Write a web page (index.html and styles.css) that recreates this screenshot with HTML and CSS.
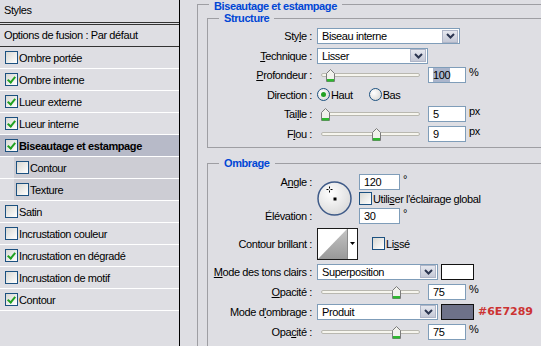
FILE: index.html
```html
<!DOCTYPE html>
<html lang="fr">
<head>
  <meta charset="UTF-8">
  <meta name="viewport" content="width=device-width, initial-scale=1.0">
  <title>Style de calque</title>
  <link rel="stylesheet" href="styles.css">
</head>
<body>
<div class="dialog">
  <div class="styles-list">
    <div class="list-head">Styles</div>
    <div class="list-options">Options de fusion : Par défaut</div>
    <div class="list-item"><span class="check"></span>Ombre portée</div>
    <div class="list-item"><span class="check on"></span>Ombre interne</div>
    <div class="list-item"><span class="check on"></span>Lueur externe</div>
    <div class="list-item"><span class="check on"></span>Lueur interne</div>
    <div class="list-item selected"><span class="check on"></span>Biseautage et estampage</div>
    <div class="list-item sub"><span class="check"></span>Contour</div>
    <div class="list-item sub"><span class="check"></span>Texture</div>
    <div class="list-item"><span class="check"></span>Satin</div>
    <div class="list-item"><span class="check"></span>Incrustation couleur</div>
    <div class="list-item"><span class="check on"></span>Incrustation en dégradé</div>
    <div class="list-item"><span class="check"></span>Incrustation de motif</div>
    <div class="list-item"><span class="check on"></span>Contour</div>
  </div>

  <div class="settings">
    <fieldset class="group outer">
      <legend>Biseautage et estampage</legend>
      <div class="group-body">

        <fieldset class="group structure">
          <legend>Structure</legend>
          <div class="rows">
            <div class="row">
              <label>Sty<u>l</u>e :</label>
              <div class="select style-select">
                <span class="value">Biseau interne</span>
                <span class="arrow"><svg width="9" height="6" viewBox="0 0 9 6"><path d="M1 1l3.5 3.5L8 1" fill="none" stroke="#2b3550" stroke-width="2"/></svg></span>
              </div>
            </div>
            <div class="row">
              <label><u>T</u>echnique :</label>
              <div class="select tech-select">
                <span class="value">Lisser</span>
                <span class="arrow"><svg width="9" height="6" viewBox="0 0 9 6"><path d="M1 1l3.5 3.5L8 1" fill="none" stroke="#2b3550" stroke-width="2"/></svg></span>
              </div>
            </div>
            <div class="row">
              <label><u>P</u>rofondeur :</label>
              <div class="slider">
                <svg class="thumb" style="left:9px" width="9" height="13" viewBox="0 0 9 13"><path d="M.5 4.5L4.5.5l4 4v8h-8z" fill="#f1f1ec" stroke="#7b7b7b"/><path d="M1 10h7v2.5H1z" fill="#2eb82e"/></svg>
              </div>
              <span class="field"><span class="picked">100</span></span>
              <span class="unit">%</span>
            </div>
            <div class="row">
              <label>Direction :</label>
              <span class="radio on"><span class="dot"></span>Haut</span>
              <span class="radio"><span class="dot"></span>Bas</span>
            </div>
            <div class="row">
              <label>Tai<u>l</u>le :</label>
              <div class="slider">
                <svg class="thumb" style="left:4px" width="9" height="13" viewBox="0 0 9 13"><path d="M.5 4.5L4.5.5l4 4v8h-8z" fill="#f1f1ec" stroke="#7b7b7b"/><path d="M1 10h7v2.5H1z" fill="#2eb82e"/></svg>
              </div>
              <span class="field">5</span>
              <span class="unit">px</span>
            </div>
            <div class="row">
              <label>F<u>l</u>ou :</label>
              <div class="slider">
                <svg class="thumb" style="left:55px" width="9" height="13" viewBox="0 0 9 13"><path d="M.5 4.5L4.5.5l4 4v8h-8z" fill="#f1f1ec" stroke="#7b7b7b"/><path d="M1 10h7v2.5H1z" fill="#2eb82e"/></svg>
              </div>
              <span class="field">9</span>
              <span class="unit">px</span>
            </div>
          </div>
        </fieldset>

        <fieldset class="group shading">
          <legend>Ombrage</legend>
          <div class="rows">
            <div class="angle-block">
              <label class="angle-label">A<u>n</u>gle :</label>
              <svg class="dial" width="35" height="35" viewBox="0 0 35 35">
                <defs>
                  <radialGradient id="dialfill" cx="40%" cy="35%" r="70%">
                    <stop offset="0" stop-color="#ffffff"/>
                    <stop offset="1" stop-color="#d9d9d9"/>
                  </radialGradient>
                </defs>
                <circle cx="17.5" cy="17.5" r="16.5" fill="url(#dialfill)" stroke="#3e5a88" stroke-width="1.5"/>
                <path d="M12.5 5.5v2M12.5 9.5v2M9.5 8.5h2M13.5 8.5h2" stroke="#000" stroke-width="1"/>
                <rect x="16.5" y="16.5" width="3" height="3" fill="#000"/>
              </svg>
              <div class="angle-value"><span class="field wide">120</span><span class="unit">°</span></div>
              <div class="global-light"><span class="check"></span>Utili<u>s</u>er l'éclairage global</div>
              <label class="elev-label">Élévation :</label>
              <div class="elev-value"><span class="field wide">30</span><span class="unit">°</span></div>
            </div>
            <div class="row contour-row">
              <label>Contour brillant :</label>
              <svg class="contour" width="41" height="32" viewBox="0 0 41 32">
                <defs>
                  <linearGradient id="contourfill" x1="0" y1="0" x2="0" y2="1">
                    <stop offset="0" stop-color="#c4c4c4"/>
                    <stop offset="1" stop-color="#999999"/>
                  </linearGradient>
                </defs>
                <rect x=".5" y=".5" width="40" height="31" fill="#fff" stroke="#1a1a1a"/>
                <path d="M1 31L30 1v30z" fill="url(#contourfill)"/>
                <path d="M30.5 1v30" stroke="#8a8a8a"/>
                <path d="M33 14h5l-2.5 3z" fill="#000"/>
              </svg>
              <span class="check lisse"></span>Li<u>s</u>sé
            </div>
            <div class="row">
              <label><u>M</u>ode des tons clairs :</label>
              <div class="select mode-select">
                <span class="value">Superposition</span>
                <span class="arrow"><svg width="9" height="6" viewBox="0 0 9 6"><path d="M1 1l3.5 3.5L8 1" fill="none" stroke="#2b3550" stroke-width="2"/></svg></span>
              </div>
              <span class="swatch light"></span>
            </div>
            <div class="row">
              <label><u>O</u>pacité :</label>
              <div class="slider">
                <svg class="thumb" style="left:75px" width="9" height="13" viewBox="0 0 9 13"><path d="M.5 4.5L4.5.5l4 4v8h-8z" fill="#f1f1ec" stroke="#7b7b7b"/><path d="M1 10h7v2.5H1z" fill="#2eb82e"/></svg>
              </div>
              <span class="field">75</span>
              <span class="unit">%</span>
            </div>
            <div class="row">
              <label>Mode d<u>'</u>ombrage :</label>
              <div class="select mode-select">
                <span class="value">Produit</span>
                <span class="arrow"><svg width="9" height="6" viewBox="0 0 9 6"><path d="M1 1l3.5 3.5L8 1" fill="none" stroke="#2b3550" stroke-width="2"/></svg></span>
              </div>
              <span class="swatch" style="background:#6e7289"></span>
              <span class="hex">#6E7289</span>
            </div>
            <div class="row">
              <label>Opa<u>c</u>ité :</label>
              <div class="slider">
                <svg class="thumb" style="left:75px" width="9" height="13" viewBox="0 0 9 13"><path d="M.5 4.5L4.5.5l4 4v8h-8z" fill="#f1f1ec" stroke="#7b7b7b"/><path d="M1 10h7v2.5H1z" fill="#2eb82e"/></svg>
              </div>
              <span class="field">75</span>
              <span class="unit">%</span>
            </div>
          </div>
        </fieldset>

      </div>
    </fieldset>
  </div>
</div>
</body>
</html>
```

FILE: styles.css
```css
body {
  margin: 0;
  background: #dedee3;
  font-family: "Liberation Sans", Arial, sans-serif;
  font-size: 11px;
  letter-spacing: -0.4px;
  color: #000;
  overflow: hidden;
}
.dialog {
  display: flex;
  height: 346px;
}

/* left list */
.styles-list {
  width: 179px;
  flex-shrink: 0;
  border-right: 1px solid #000;
}
.list-head {
  height: 22px;
  line-height: 21px;
  padding-left: 4px;
  border-bottom: 3px double #333;
}
.list-options {
  height: 21px;
  line-height: 21px;
  padding-left: 4px;
  border-bottom: 1px solid #333;
}
.list-item {
  display: flex;
  align-items: center;
  height: 21px;
  padding-left: 5px;
  border-bottom: 1px solid #fff;
}
.list-item.selected {
  background: #b7bac8;
  font-weight: bold;
}
.list-item.sub {
  padding-left: 16px;
  background: linear-gradient(to right, #dedee3 14px, #cdcdd4 14px);
}
.check {
  position: relative;
  flex-shrink: 0;
  width: 11px;
  height: 11px;
  margin-right: 1px;
  border: 1px solid #1c5180;
  background: linear-gradient(135deg, #d8d8d3, #fff);
}
.check.on::after {
  content: "";
  position: absolute;
  left: 3px;
  top: 1px;
  width: 3px;
  height: 6px;
  border: solid #21a121;
  border-width: 0 2px 2px 0;
  transform: rotate(40deg);
}

/* right settings */
.settings {
  flex: 1;
  padding-left: 17px;
  overflow: hidden;
}
.group {
  margin: 0;
  padding: 0;
  min-width: 0;
  border: 1px solid #9e9ea3;
}
.group legend {
  margin-left: 11px;
  padding: 0 5px;
  line-height: 13px;
  font-weight: bold;
  color: #0046d5;
}
.outer {
  margin-top: -3.5px;
  width: 380px;
  height: 400px;
}
.outer > legend {
  padding-top: 3px;
}
.group-body {
  padding-left: 9px;
}
.structure {
  margin-top: -0.5px;
}
.shading {
  margin-top: 9px;
  height: 220px;
}
.rows {
  display: flex;
  flex-direction: column;
  gap: 3.6px;
  padding: 3px 0 5px;
}
.shading .rows {
  gap: 4px;
  padding-top: 4px;
}
.row {
  display: flex;
  align-items: center;
  height: 16px;
}
.row > label {
  flex-shrink: 0;
  width: 104px;
  margin-right: 5px;
  text-align: right;
}

/* controls */
.select {
  display: flex;
  align-items: center;
  box-sizing: border-box;
  height: 16px;
  border: 1px solid #7f9db9;
  background: #fff;
}
.select .value {
  flex: 1;
  padding-left: 4px;
}
.select .arrow {
  display: flex;
  align-items: center;
  justify-content: center;
  box-sizing: border-box;
  width: 16px;
  height: 13px;
  margin-right: 1px;
  border: 1px solid #aeb5c7;
  background: linear-gradient(#e6e8ef, #c4c8d6);
}
.style-select {
  width: 143px;
}
.tech-select {
  width: 111px;
}
.mode-select {
  width: 121px;
}
.slider {
  position: relative;
  flex-shrink: 0;
  width: 108px;
  height: 16px;
}
.slider::before {
  content: "";
  position: absolute;
  left: 4px;
  top: 6px;
  width: 97px;
  height: 2px;
  border: 1px solid #b9b8b0;
  border-radius: 2px;
  background: #f6f5ee;
}
.thumb {
  position: absolute;
  top: 2px;
}
.field {
  box-sizing: border-box;
  width: 38px;
  height: 16px;
  margin-left: 3px;
  padding-left: 4px;
  line-height: 14px;
  border: 1px solid #7f9db9;
  background: #fff;
}
.field.wide {
  width: 41px;
  margin-left: 0;
}
.picked {
  background: #aab5cc;
  padding: 1px 0;
}
.unit {
  align-self: flex-start;
  margin-left: 3px;
  line-height: 11px;
}
.radio {
  display: flex;
  align-items: center;
  margin-right: 16px;
}
.radio .dot {
  position: relative;
  width: 11px;
  height: 11px;
  margin-right: 1px;
  border: 1px solid #1c5180;
  border-radius: 50%;
  background: radial-gradient(circle at 35% 35%, #fff, #d2d2ce);
}
.radio.on .dot::after {
  content: "";
  position: absolute;
  left: 3px;
  top: 3px;
  width: 5px;
  height: 5px;
  border-radius: 50%;
  background: #21a121;
}

/* angle block */
.angle-block {
  display: grid;
  grid-template-columns: 109px 42px auto;
  grid-template-rows: 16px 18px 16px;
  align-items: center;
}
.angle-block label {
  padding-right: 5px;
  text-align: right;
}
.angle-label {
  grid-column: 1;
  grid-row: 1;
}
.elev-label {
  grid-column: 1;
  grid-row: 3;
}
.dial {
  grid-column: 2;
  grid-row: 1 / 4;
}
.angle-value,
.elev-value {
  display: flex;
  height: 16px;
  grid-column: 3;
}
.angle-value {
  grid-row: 1;
}
.elev-value {
  grid-row: 3;
}
.global-light {
  display: flex;
  align-items: center;
  grid-column: 3;
  grid-row: 2;
}

.contour-row {
  height: 32px;
}
.check.lisse {
  margin-left: 14px;
}
.swatch {
  box-sizing: border-box;
  width: 33px;
  height: 16px;
  margin-left: 3px;
  border: 1px solid #111;
}
.swatch.light {
  background: #fff;
}
.hex {
  margin-left: 4px;
  font-family: "DejaVu Sans", sans-serif;
  font-size: 11px;
  font-weight: bold;
  letter-spacing: 0;
  color: #cc3333;
}
```
